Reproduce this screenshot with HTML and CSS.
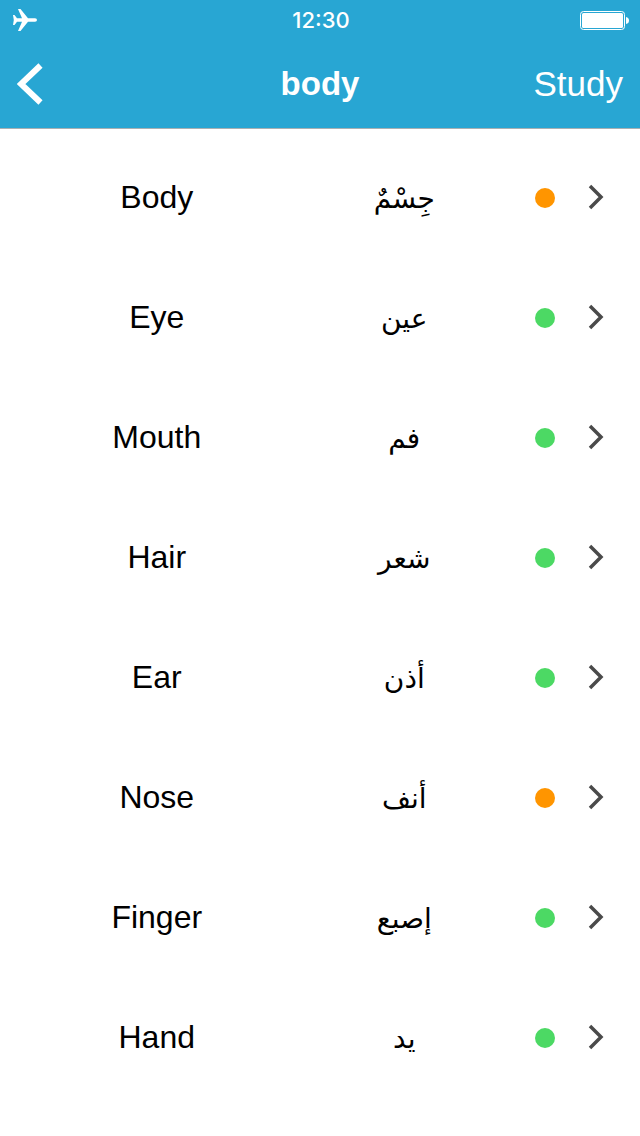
FILE: index.html
```
<!DOCTYPE HTML>
<html lang="en">
<head>
<meta charset="utf-8">
<meta name="viewport" content="width=device-width">
<title>body</title>
<link rel="stylesheet" href="styles.css">
</head>

<body>
<header class="top">
	<div class="status">
		<svg class="plane" viewBox="0 0 24 22" width="24" height="22"><path d="M0 6h1.500l2.500 3.200h5L5 0h2.500l7.500 9.200h7q2 .3 2 1.800t-2 1.800h-7L7.500 22H5l4-9.200H4L1.500 16H0l.8-5z"/></svg>
		<span class="time">12:30</span>
		<svg class="battery" viewBox="0 0 49 19" width="49" height="19"><rect class="case" x=".5" y=".5" width="44" height="18" rx="3"/><rect x="2" y="2" width="41" height="15" rx="1.500"/><path d="M46 6q3 .5 3 3.500t-3 3.500z"/></svg>
	</div>
	<nav class="bar">
		<button class="back" aria-label="Back"><svg viewBox="0 0 26 42" width="26" height="42"><path d="M23.500 2.500L4 21l19.500 18.500"/></svg></button>
		<h1>body</h1>
		<a class="study" href="#study">Study</a>
	</nav>
</header>

<ul class="list">
	<li><a href="#1"><span class="word">Body</span><span class="ar" lang="ar" dir="rtl">جِسْمٌ</span><i class="dot orange"></i><svg class="arrow" viewBox="0 0 16 26" width="16" height="26"><path d="M2 2l11 11L2 24"/></svg></a></li>
	<li><a href="#2"><span class="word">Eye</span><span class="ar" lang="ar" dir="rtl">عين</span><i class="dot"></i><svg class="arrow" viewBox="0 0 16 26" width="16" height="26"><path d="M2 2l11 11L2 24"/></svg></a></li>
	<li><a href="#3"><span class="word">Mouth</span><span class="ar" lang="ar" dir="rtl">فم</span><i class="dot"></i><svg class="arrow" viewBox="0 0 16 26" width="16" height="26"><path d="M2 2l11 11L2 24"/></svg></a></li>
	<li><a href="#4"><span class="word">Hair</span><span class="ar" lang="ar" dir="rtl">شعر</span><i class="dot"></i><svg class="arrow" viewBox="0 0 16 26" width="16" height="26"><path d="M2 2l11 11L2 24"/></svg></a></li>
	<li><a href="#5"><span class="word">Ear</span><span class="ar" lang="ar" dir="rtl">أذن</span><i class="dot"></i><svg class="arrow" viewBox="0 0 16 26" width="16" height="26"><path d="M2 2l11 11L2 24"/></svg></a></li>
	<li><a href="#6"><span class="word">Nose</span><span class="ar" lang="ar" dir="rtl">أنف</span><i class="dot orange"></i><svg class="arrow" viewBox="0 0 16 26" width="16" height="26"><path d="M2 2l11 11L2 24"/></svg></a></li>
	<li><a href="#7"><span class="word">Finger</span><span class="ar" lang="ar" dir="rtl">إصبع</span><i class="dot"></i><svg class="arrow" viewBox="0 0 16 26" width="16" height="26"><path d="M2 2l11 11L2 24"/></svg></a></li>
	<li><a href="#8"><span class="word">Hand</span><span class="ar" lang="ar" dir="rtl">يد</span><i class="dot"></i><svg class="arrow" viewBox="0 0 16 26" width="16" height="26"><path d="M2 2l11 11L2 24"/></svg></a></li>
</ul>
</body>
</html>
```
FILE: styles.css
```
* {margin:0; padding:0; box-sizing:border-box;}
body {background:#fff; color:#000; font-family:"Liberation Sans", Arial, sans-serif;}
li {list-style:none;}
a {color:inherit; text-decoration:none;}
svg {display:block;}

.top {background:#28a6d3; color:#fff; border-bottom:1px solid #a8b0b3;}
.status, .bar {display:grid; grid-template-columns:1fr auto 1fr; align-items:center;}
.status {height:40px; padding:0 11px 0 13px;}
.status svg {fill:#fff;}
.status .case {fill:none; stroke:#fff;}
.time {font-family:Inter, "Liberation Sans", sans-serif; font-size:22px; font-weight:500; line-height:40px;}
.battery {justify-self:end;}

.bar {height:88px; padding:0 17px;}
.bar h1 {font-size:33px; line-height:40px;}
.back {justify-self:start; background:none; border:0; cursor:pointer;}
.back path {fill:none; stroke:#fff; stroke-width:6;}
.study {justify-self:end; font-size:35px; line-height:40px;}

.list {padding:8px 0;}
.list a {display:flex; align-items:center; height:120px; padding:0 36px 0 33px;}
.word, .ar {flex:1; text-align:center; font-size:32px; line-height:40px;}
.ar {padding-top:4px; font-family:"DejaVu Sans", sans-serif; font-size:28px;}
.dot {width:20px; height:20px; margin:2px 33px 0 7px; border-radius:50%; background:#4cd964;}
.dot.orange {background:#ff9500;}
.arrow path {fill:none; stroke:#4a4a4a; stroke-width:3.500;}
```
